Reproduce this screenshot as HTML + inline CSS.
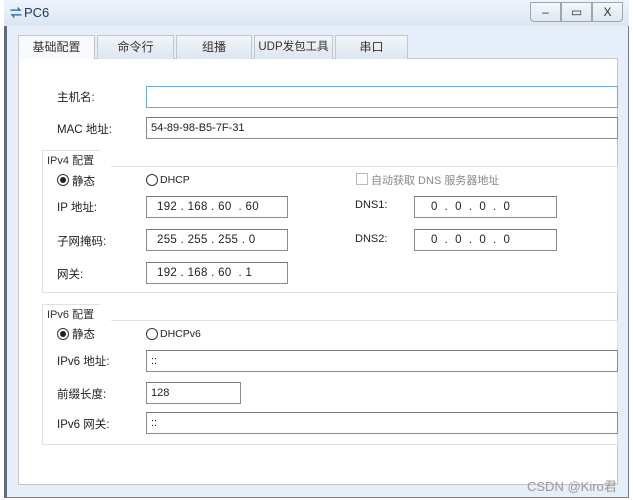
<!DOCTYPE html><html><head><meta charset="utf-8"><style>
*{margin:0;padding:0;box-sizing:border-box}
body{width:633px;height:500px;background:#fff;position:relative;overflow:hidden;font-family:"Liberation Sans","Noto Sans CJK SC",sans-serif;font-size:11px;color:#222}
.a{position:absolute}
.win{left:4px;top:0;width:625px;height:498px;background:#e6eef9;border:1px solid #6f7f92;border-radius:5px 5px 0 0;border-left:3px solid #5d6b7d}
.title{left:4px;top:0;width:625px;height:26px;background:linear-gradient(#eef4fb,#dbe6f3)}
.panel{left:18px;top:58px;width:600px;height:427px;background:#fff;border:1px solid #c6c6c6}
.tab{top:35px;height:24px;border:1px solid #c3c8cf;border-bottom:none;background:linear-gradient(#f3f6fa,#dde5ee);text-align:center;line-height:22px;font-size:12px;color:#333}
.in{border:1px solid #8a8a8a;border-top-color:#7a7a7a;background:#fff;height:22px;line-height:20px;padding-left:4px;font-size:11px}
.lb{font-size:11.5px}
.grp{border:1px solid #e2e2e2;background:#fff}
.gt{font-size:11px;color:#333}
.rad{width:12px;height:12px;border:1px solid #333;border-radius:50%}
.ip{font-size:11.5px;letter-spacing:0.3px;padding-left:10px;white-space:pre}
.btn{top:2px;width:31px;height:20px;border:1px solid #9aa6b4;background:linear-gradient(#f6f9fc,#dfe7f0);text-align:center;line-height:18px;font-size:12px;color:#333}
</style></head><body>
<div class="a win"></div>
<div class="a title"></div>
<div class="a" style="left:10px;top:4px;font-size:12px;color:#1f5fa8;font-weight:bold">⇌</div>
<div class="a" style="left:24px;top:5px;font-size:13px;color:#1a3a6a">PC6</div>
<div class="a btn" style="left:530px;border-radius:0 0 0 4px">–</div>
<div class="a btn" style="left:561px">▭</div>
<div class="a btn" style="left:592px;border-radius:0 0 4px 0">X</div>
<div class="a panel"></div>
<div class="a tab" style="left:18px;width:77px;background:#f7f9fc">基础配置</div>
<div class="a tab" style="left:97px;width:77px">命令行</div>
<div class="a tab" style="left:176px;width:76px">组播</div>
<div class="a tab" style="left:254px;width:79px;font-size:11.5px">UDP发包工具</div>
<div class="a tab" style="left:335px;width:73px">串口</div>

<div class="a lb" style="left:57px;top:89px">主机名:</div>
<div class="a in" style="left:146px;top:86px;width:472px;border-color:#6ea8dc"></div>
<div class="a lb" style="left:57px;top:121px">MAC 地址:</div>
<div class="a in" style="left:146px;top:117px;width:472px">54-89-98-B5-7F-31</div>

<div class="a grp" style="left:42px;top:166px;width:576px;height:127px"></div>
<div class="a" style="left:42px;top:150px;width:70px;height:17px;background:#fff;border:1px solid #e2e2e2;border-bottom:none;clip-path:polygon(0 0,58px 0,100% 100%,0 100%)"></div>
<div class="a gt" style="left:47px;top:152px">IPv4 配置</div>
<div class="a rad" style="left:57px;top:174px"></div><div class="a" style="left:60px;top:177px;width:6px;height:6px;border-radius:50%;background:#222"></div>
<div class="a lb" style="left:72px;top:173px">静态</div>
<div class="a rad" style="left:146px;top:174px"></div><div class="a" style="left:160px;top:174px;font-size:10.5px">DHCP</div>
<div class="a" style="left:356px;top:173px;width:12px;height:12px;border:1px solid #bbb"></div>
<div class="a" style="left:371px;top:172px;color:#888">自动获取 DNS 服务器地址</div>
<div class="a lb" style="left:57px;top:199px">IP 地址:</div>
<div class="a in ip" style="left:146px;top:196px;width:142px">192 . 168 . 60  . 60</div>
<div class="a lb" style="left:57px;top:233px">子网掩码:</div>
<div class="a in ip" style="left:146px;top:229px;width:142px">255 . 255 . 255 . 0</div>
<div class="a lb" style="left:57px;top:266px">网关:</div>
<div class="a in ip" style="left:146px;top:262px;width:142px">192 . 168 . 60  . 1</div>
<div class="a" style="left:355px;top:199px">DNS1:</div>
<div class="a in ip" style="left:414px;top:196px;width:143px;padding-left:16px">0  .  0  .  0  .  0</div>
<div class="a" style="left:355px;top:233px">DNS2:</div>
<div class="a in ip" style="left:414px;top:229px;width:143px;padding-left:16px">0  .  0  .  0  .  0</div>

<div class="a grp" style="left:42px;top:320px;width:576px;height:125px"></div>
<div class="a" style="left:42px;top:304px;width:70px;height:17px;background:#fff;border:1px solid #e2e2e2;border-bottom:none;clip-path:polygon(0 0,58px 0,100% 100%,0 100%)"></div>
<div class="a gt" style="left:47px;top:306px">IPv6 配置</div>
<div class="a rad" style="left:57px;top:328px"></div><div class="a" style="left:60px;top:331px;width:6px;height:6px;border-radius:50%;background:#222"></div>
<div class="a lb" style="left:72px;top:326px">静态</div>
<div class="a rad" style="left:146px;top:328px"></div><div class="a" style="left:160px;top:328px;font-size:10.5px">DHCPv6</div>
<div class="a lb" style="left:57px;top:353px">IPv6 地址:</div>
<div class="a in" style="left:146px;top:350px;width:472px">::</div>
<div class="a lb" style="left:57px;top:386px">前缀长度:</div>
<div class="a in" style="left:146px;top:382px;width:95px">128</div>
<div class="a lb" style="left:57px;top:416px">IPv6 网关:</div>
<div class="a in" style="left:146px;top:412px;width:472px">::</div>

<div class="a" style="left:527px;top:476px;font-size:13px;color:#9a9a9a">CSDN @Kiro君</div>
</body></html>
